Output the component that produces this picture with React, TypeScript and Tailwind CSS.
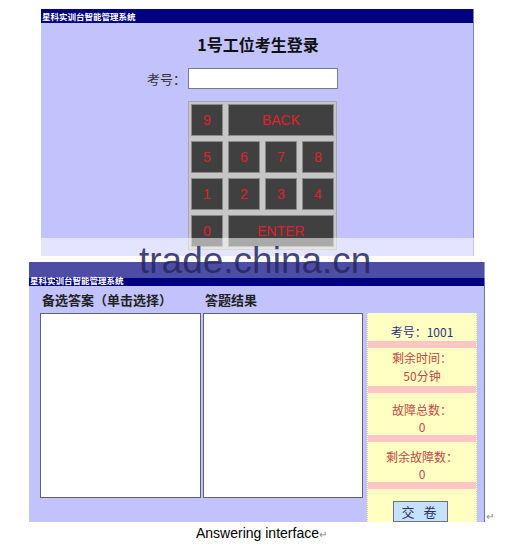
export default function App() {
  const cjk = "font-['Noto_Sans_CJK_SC',sans-serif]";
  const cell =
    "bg-[#404040] border border-[#8a8a8a] flex items-center justify-center text-[#e0202a] text-[14px] font-['Liberation_Sans',sans-serif]";
  const band = "h-[7px] bg-[#ffc4c4]";
  return (
    <div className="relative w-[508px] h-[545px] bg-white overflow-hidden font-['Liberation_Sans','Noto_Sans_CJK_SC',sans-serif]">
      {/* top window */}
      <div className="ml-[41px] mt-[9px] w-[433px] h-[247px] bg-[#c2c2fc] border-r border-[#8080b8] overflow-hidden flex flex-col">
        <div className={`h-[14px] bg-[#000080] text-white text-[8.5px] font-bold leading-[14px] pl-[1px] ${cjk}`}>
          星科实训台智能管理系统
        </div>
        <div className={`mt-[11px] h-[20px] text-center text-[16px] font-bold leading-[20px] text-[#111] pl-[2px] ${cjk}`}>
          1号工位考生登录
        </div>
        <div className="mt-[14px] flex items-center pl-[106px]">
          <span className={`w-[41px] text-[13px] text-[#333] ${cjk}`}>考号：</span>
          <div className="w-[150px] h-[21px] bg-white border border-[#7a7a8a]" />
        </div>
        <div className="mt-[12px] ml-[147px] w-[149px] grid grid-cols-4 auto-rows-[32px] gap-[5px] p-[2px] bg-[#c6c6c6] border border-[#a8a8a8]">
          <div className={cell}>9</div>
          <div className={`${cell} col-span-3`}>BACK</div>
          <div className={cell}>5</div>
          <div className={cell}>6</div>
          <div className={cell}>7</div>
          <div className={cell}>8</div>
          <div className={cell}>1</div>
          <div className={cell}>2</div>
          <div className={cell}>3</div>
          <div className={cell}>4</div>
          <div className={cell}>0</div>
          <div className={`${cell} col-span-3`}>ENTER</div>
        </div>
      </div>

      {/* bottom window */}
      <div className="ml-[29px] mt-[6px] w-[456px] h-[260px] bg-[#c2c2fc] border-r border-[#7070b0] flex flex-col">
        <div className={`h-[24px] bg-[#000080] text-white text-[8.5px] font-bold leading-[10px] pl-[1px] flex items-end pb-[1px] ${cjk}`}>
          星科实训台智能管理系统
        </div>
        <div className="flex pl-[11px]">
          <div className="w-[161px] flex flex-col">
            <div className={`h-[27px] flex items-center pl-[2px] text-[13px] font-bold text-[#222] ${cjk}`}>
              备选答案（单击选择）
            </div>
            <div className="h-[185px] bg-white border border-[#606070]" />
          </div>
          <div className="ml-[2px] w-[160px] flex flex-col">
            <div className={`h-[27px] flex items-center pl-[2px] text-[13px] font-bold text-[#222] ${cjk}`}>
              答题结果
            </div>
            <div className="h-[185px] bg-white border border-[#606070]" />
          </div>
          <div className={`ml-[4px] mt-[27px] w-[110px] h-[209px] bg-[#ffffc2] border-x border-dotted border-[#d8d8a8] flex flex-col text-[12px] text-center ${cjk}`}>
            <div className="h-[28px] pt-[10px] leading-[18px] text-[#303088]">考号：1001</div>
            <div className={band} />
            <div className="h-[38px] pt-[1px] leading-[18px] text-[#c04848]">
              <div>剩余时间：</div>
              <div>50分钟</div>
            </div>
            <div className={band} />
            <div className="h-[42px] pt-[8px] leading-[17px] text-[#c04848]">
              <div>故障总数：</div>
              <div>0</div>
            </div>
            <div className={band} />
            <div className="h-[40px] pt-[6px] leading-[17px] text-[#c04848]">
              <div>剩余故障数：</div>
              <div>0</div>
            </div>
            <div className={band} />
            <div className="mt-[12px] ml-[25px] w-[55px] h-[21px] bg-[#c4e2fc] border border-[#707080] text-[13px] leading-[19px] text-[#303060] tracking-[3px]">
              交 卷
            </div>
          </div>
        </div>
      </div>

      {/* caption */}
      <div className="mt-[3px] pl-[196px] h-[16px] text-[14px] leading-[16px] text-black">
        Answering interface<span className="text-[10px] text-[#888]">↵</span>
      </div>

      {/* watermark overlays */}
      <div className="absolute left-[26px] top-[238px] w-[460px] h-[24px] bg-white/55" />
      <div className="absolute left-[29px] top-[262px] w-[456px] h-[16px] bg-white/30" />
      <div className="absolute left-[139px] top-[242px] text-[37px] leading-none text-[#26265e]/85 whitespace-nowrap">
        trade.china.cn
      </div>
      <div className="absolute left-[486px] top-[512px] text-[10px] leading-none text-[#888]">↵</div>
    </div>
  );
}
